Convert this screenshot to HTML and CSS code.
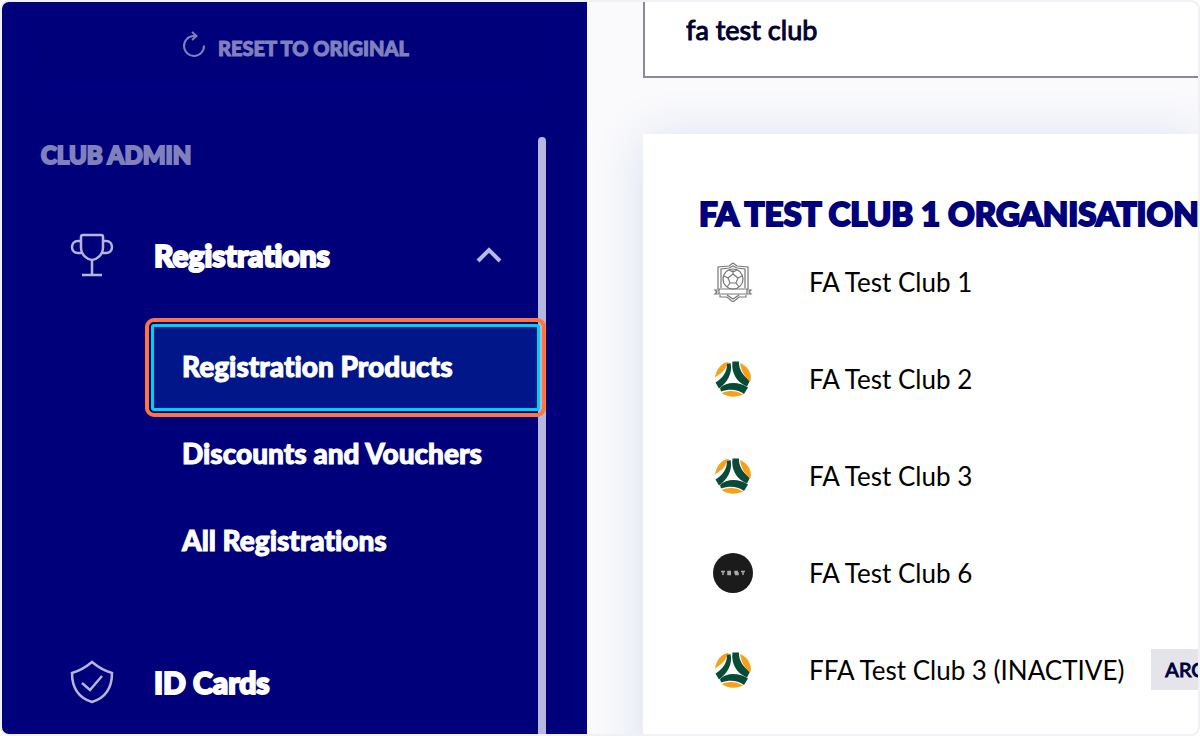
FILE: index.html
```html
<!DOCTYPE html>
<html lang="en">
<head>
<meta charset="utf-8">
<meta name="viewport" content="width=device-width, initial-scale=1">
<title>Club Admin</title>
<link rel="stylesheet" href="styles.css">
</head>
<body>
<svg class="sprite" aria-hidden="true">
  <symbol id="ball" viewBox="0 0 36 36">
    <path fill="#f7a11a" d="M0 17C1 8 7 1 14 1L11 6C9 11 4 13 0 17Z"/>
    <path fill="#0a4a38" d="M12 3L15.500 2C18 12 12 22 4 27.500L0.500 21.500C8 17 12 11 12 3Z"/>
    <path fill="#0a4a38" d="M17.500 0.500H24C23.500 8 28 15 35 19.500L32 25.500C21 21 16 11 17.500 0.500Z"/>
    <path fill="#f7a11a" d="M25 2C33 5 38 14 35 21C30 16 26 10 25 2Z"/>
    <path fill="#0a4a38" d="M5 27C12 20 25 21 33 26.500L29 33C22 28 14 28 6 30.500Z"/>
    <path fill="#f7a11a" d="M6.500 32C13 29 21 29 28 33.500C21 37 12 36 6.500 32Z"/>
  </symbol>
</svg>
<div class="shell">
  <aside class="sidebar">
    <button class="reset" type="button">
      <svg class="reset-icon" viewBox="0 0 24 28" aria-hidden="true"><path d="M22 14.500A10 10 0 1 1 11 5H13.500M10 1L14.500 5L10 9"/></svg>
      Reset to original
    </button>
    <div class="scroll">
      <nav class="nav" aria-label="Club admin">
        <h2 class="nav-title">Club Admin</h2>
        <button class="group" type="button" aria-expanded="true">
          <svg class="group-icon" viewBox="0 0 44 44" aria-hidden="true"><path d="M13 2h18q2 0 2 2v11c0 7-7 12-11 12s-11-5-11-12V4q0-2 2-2ZM11 8H8C0 8 0 20 8 20h4M33 8h3c8 0 8 12 0 12h-4M22 27v15M12 42h20"/></svg>
          <span>Registrations</span>
          <svg class="chevron" viewBox="0 0 26 16" aria-hidden="true"><path d="M2 14L13 3L24 14"/></svg>
        </button>
        <div class="sub">
          <a class="link current" href="#products">Registration Products</a>
          <a class="link" href="#discounts">Discounts and Vouchers</a>
          <a class="link" href="#all">All Registrations</a>
        </div>
        <button class="group" type="button">
          <svg class="group-icon" viewBox="0 0 44 44" aria-hidden="true"><path d="M22 2C28 7 35 11 42 13C42 28 35 38 22 42C9 38 2 28 2 13C9 11 16 7 22 2ZM12 23l8 7L32 16"/></svg>
          <span>ID Cards</span>
        </button>
      </nav>
      <div class="thumb"></div>
    </div>
  </aside>
  <main class="main">
    <input class="search" type="text" value="fa test club" aria-label="Search organisations">
    <section class="card">
      <h1 class="card-title">FA Test Club 1 Organisation</h1>
      <ul class="clubs">
        <li class="club">
          <svg class="logo" viewBox="0 0 40 40" aria-hidden="true" fill="none" stroke="#777" stroke-width="1.200"><path d="M20 1L24 4L35 5V27M20 1L16 4L5 5V27M8 26V7L16 6L20 4L24 6L32 7V26M2 28H6V32H2L4 30ZM38 28H34V32H38L36 30ZM6 27H34V32H6ZM7 33V35H14L20 40L26 35H33V33M14 33L20 37L26 33"/><circle cx="20" cy="17" r="10"/><path d="M20 12L25 16L23 21H17L15 16ZM20 12V8M25 16L29 14M23 21L26 25M17 21L14 25M15 16L11 14M16 8L20 10L24 8"/></svg>
          <span>FA Test Club 1</span>
        </li>
        <li class="club"><svg class="logo ball" aria-hidden="true"><use href="#ball"/></svg><span>FA Test Club 2</span></li>
        <li class="club"><svg class="logo ball" aria-hidden="true"><use href="#ball"/></svg><span>FA Test Club 3</span></li>
        <li class="club">
          <svg class="logo" viewBox="0 0 40 40" aria-hidden="true"><circle cx="20" cy="20" r="20" fill="#1b1b1b"/><path stroke="#aaa" stroke-width="1.500" fill="none" d="M8 18.500h4M10 18v4M18 18.500h-3v3h3M15 20h3M25 18.500h-3v1.500h3v1.500h-3M28 18.500h4M30 18v4"/></svg>
          <span>FA Test Club 6</span>
        </li>
        <li class="club"><svg class="logo ball" aria-hidden="true"><use href="#ball"/></svg><span>FFA Test Club 3 (INACTIVE)</span><span class="tag">ARCHIVED</span></li>
      </ul>
    </section>
  </main>
</div>
</body>
</html>
```
FILE: styles.css
```css
* { box-sizing: border-box; }

body {
  margin: 0;
  background: #fff;
  color: #000;
  font-family: Lato, "Noto Sans", sans-serif;
  font-size: 26px;
  font-variant-ligatures: none;
}

button {
  border: 0;
  background: none;
  font: inherit;
  font-variant-ligatures: none;
}

.sprite {
  display: none;
}

.shell {
  display: flex;
  height: 100vh;
  border: 2px solid #f0f0f6;
  border-radius: 9px;
  overflow: hidden;
  background: #fafafc;
}

.sidebar {
  flex: 0 0 585px;
  display: flex;
  flex-direction: column;
  padding: 11px 41px 0 33px;
  background: #00007b;
  color: #fff;
}

.reset {
  display: flex;
  flex: none;
  align-items: center;
  justify-content: center;
  gap: 12px;
  height: 70px;
  padding: 0 0 0 10px;
  color: #8080bd;
  font-size: 20px;
  font-weight: 900;
  text-transform: uppercase;
  box-shadow: 0 8px 30px #000084;
  -webkit-text-stroke: 1px;
}

.reset-icon {
  width: 24px;
  height: 28px;
  margin-bottom: 6px;
  fill: none;
  stroke: currentColor;
  stroke-width: 2;
}

.scroll {
  display: flex;
  flex: 1;
  min-height: 0;
  margin-top: 54px;
}

.nav {
  flex: 1;
  min-width: 0;
}

.thumb {
  flex: 0 0 8px;
  border-radius: 4px 4px 0 0;
  background: #b3b8dc;
}

.nav-title {
  margin: 0 0 52px 6px;
  color: #8080bd;
  font-size: 24px;
  font-weight: 900;
  line-height: 36px;
  text-transform: uppercase;
  -webkit-text-stroke: 2px;
}

.group {
  display: flex;
  align-items: center;
  width: 100%;
  height: 60px;
  padding: 0 36px 0 35px;
  color: #fff;
  font-size: 30px;
  font-weight: 900;
  text-align: left;
  -webkit-text-stroke: 2px;
}

.group-icon {
  width: 44px;
  height: 44px;
  margin-right: 40px;
  fill: none;
  stroke: #b5b5dc;
  stroke-width: 2.500;
}

.chevron {
  width: 26px;
  height: 16px;
  margin-left: auto;
  fill: none;
  stroke: #b9b9df;
  stroke-width: 4;
}

.sub {
  display: flex;
  flex-direction: column;
  margin: 39px 0 67px 116px;
}

.link {
  height: 87px;
  margin-right: -2px;
  padding-left: 28px;
  border: 3px solid transparent;
  color: #fff;
  font-size: 28px;
  font-weight: 900;
  line-height: 79px;
  text-decoration: none;
  white-space: nowrap;
  -webkit-text-stroke: 1px;
}

.current {
  position: relative;
  border-color: #00d0e8;
  border-radius: 3px;
  background: #001689;
  outline: 4px solid #ff7442;
  outline-offset: 2px;
}

.main {
  flex: 1;
  min-width: 0;
  padding-left: 56px;
}

.search {
  display: block;
  width: 100%;
  height: 76px;
  padding: 0 42px 20px 41px;
  border: solid #8b8b98;
  border-width: 0 0 2px 2px;
  background: #fff;
  color: #00002e;
  font: inherit;
  font-size: 27px;
  -webkit-text-stroke: 1px;
}

.card {
  height: 100%;
  margin-top: 56px;
  padding: 56px 0 0 56px;
  background: #fff;
  box-shadow: 0 4px 48px #d9dff0;
}

.card-title {
  margin: 0;
  color: #00007b;
  font-size: 33px;
  font-weight: 900;
  line-height: 46px;
  text-transform: uppercase;
  white-space: nowrap;
  -webkit-text-stroke: 2px;
}

.clubs {
  margin: 25px 0 0;
  padding: 0;
  list-style: none;
}

.club {
  display: flex;
  align-items: center;
  height: 41px;
  margin-bottom: 56px;
  padding-left: 14px;
  white-space: nowrap;
}

.logo {
  flex: none;
  width: 40px;
  height: 40px;
  margin-right: 56px;
}

.ball {
  padding: 2px;
}

.tag {
  margin-left: 27px;
  padding: 0 14px;
  background: #e4e4ea;
  color: #00003c;
  font-size: 20px;
  line-height: 41px;
  -webkit-text-stroke: 1px;
}
```
